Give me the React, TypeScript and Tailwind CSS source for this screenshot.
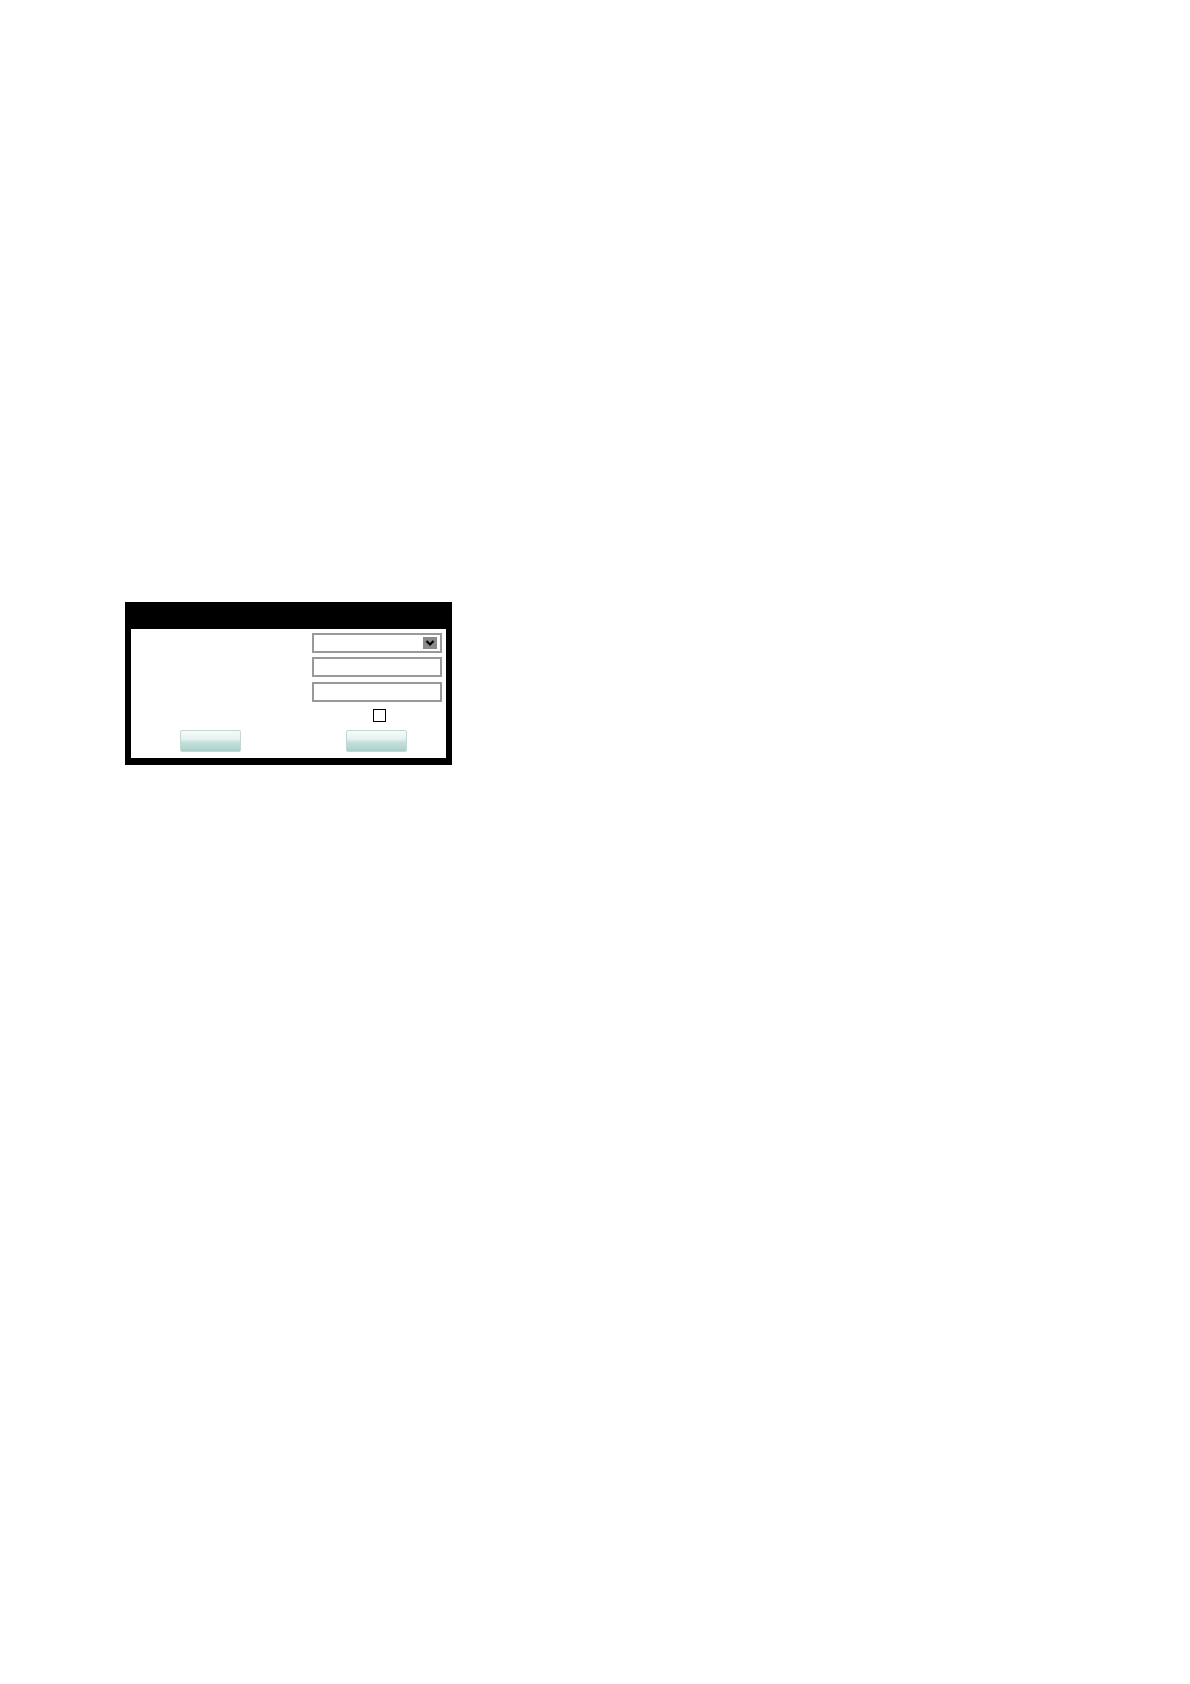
import React from "react";

function Btn() {
  return (
    <div className="h-[22px] w-[61px] rounded-[2px] border border-[#c3d6d3] bg-[linear-gradient(to_bottom,#f6fbfa_0%,#e6f2f0_40%,#c6e1dc_55%,#b5d6d0_85%,#a9cdc7_100%)]" />
  );
}

export default function App() {
  return (
    <div className="min-h-[1684px] w-[1190px] bg-white pl-[125px] pt-[602px]" style={{ fontFamily: '"Liberation Sans", Arial, sans-serif' }}>
      <div className="w-[327px]">
        <div className="h-[27px] bg-black" />
        <div className="h-[136px] border-x-[6px] border-b-[7px] border-black bg-white">
          <div className="grid grid-cols-[181px_130px] pt-[4px]">
            <div className="flex flex-col">
              <div className="h-[20px]" />
              <div className="mt-[4px] h-[20px]" />
              <div className="mt-[5px] h-[20px]" />
              <div className="mt-[7px] h-[13px]" />
              <div className="mt-[8px] pl-[49px]">
                <Btn />
              </div>
            </div>
            <div className="flex flex-col">
              <div className="flex h-[20px] items-center justify-end border-2 border-[#999] bg-white pr-[3px]">
                <div className="flex h-[12px] w-[14px] items-center justify-center bg-[#8a8a8a]">
                  <svg width="10" height="8" viewBox="0 0 10 8">
                    <path d="M1.5 2 L5 5.5 L8.5 2" fill="none" stroke="#000" strokeWidth="2.2" />
                  </svg>
                </div>
              </div>
              <div className="mt-[4px] h-[20px] border-2 border-[#999] bg-white" />
              <div className="mt-[5px] h-[20px] border-2 border-[#999] bg-white" />
              <div className="mt-[7px] pl-[61px]">
                <div className="h-[13px] w-[13px] border border-black bg-white" />
              </div>
              <div className="mt-[8px] pl-[34px]">
                <Btn />
              </div>
            </div>
          </div>
        </div>
      </div>
    </div>
  );
}
